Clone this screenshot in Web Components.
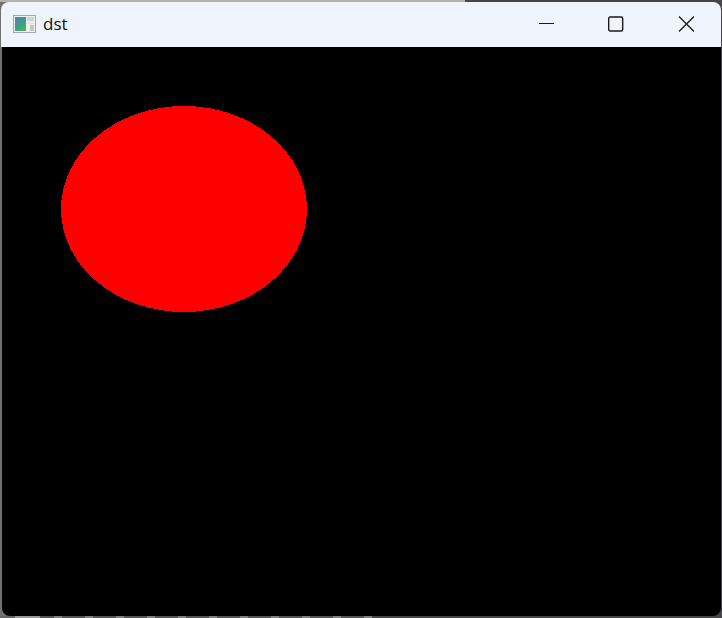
<!DOCTYPE html>
<html>
<head>
<meta charset="utf-8">
<title>dst</title>
<style>
  html, body { margin: 0; height: 100%; background: linear-gradient(90deg, #c4c4c4 50%, #46464a 50%); }
</style>
</head>
<body>
<app-window title="dst">
  <image-canvas></image-canvas>
</app-window>

<script>
class TitleBar extends HTMLElement {
  constructor() {
    super();
    this.attachShadow({ mode: "open" });
  }

  connectedCallback() {
    const title = this.getAttribute("title");
    this.shadowRoot.innerHTML = `
      <style>
        :host {
          display: flex;
          align-items: center;
          box-sizing: border-box;
          height: 45px;
          padding-bottom: 2px;
          flex: none;
          background: #eff3fb;
          border-radius: 8px 8px 0 0;
          color: #111;
          font: 17px "Open Sans", "Noto Sans", sans-serif;
        }
        .icon { display: block; margin-left: 12px; flex: none; }
        .name { margin-left: 7px; flex: 1; }
        .btn { width: 70px; height: 43px; display: flex; align-items: center; justify-content: center; flex: none; }
        .btn svg { display: block; }
      </style>
      <svg class="icon" width="23" height="18" viewBox="0 0 23 18">
        <defs>
          <linearGradient id="pic" x1="0" y1="0" x2="0.7" y2="1">
            <stop offset="0" stop-color="#4a86b0"/>
            <stop offset="0.6" stop-color="#3f9d8c"/>
            <stop offset="1" stop-color="#52ad62"/>
          </linearGradient>
        </defs>
        <rect x="0.5" y="0.5" width="22" height="17" fill="#f0f1ee" stroke="#a6a6b0"/>
        <rect x="2" y="2" width="11" height="14" fill="url(#pic)"/>
        <rect x="14" y="2" width="7" height="4" fill="#ccd5d3"/>
        <rect x="14" y="7" width="7" height="2" fill="#e4e7df"/>
        <rect x="17" y="10" width="4" height="6" fill="#c4cabf"/>
      </svg>
      <span class="name">${title}</span>
      <div class="btn">
        <svg width="16" height="16" viewBox="0 0 16 16"><path d="M1 7.5H16" stroke="#1a1a1a" stroke-width="1" fill="none"/></svg>
      </div>
      <div class="btn">
        <svg width="16" height="16" viewBox="0 0 16 16"><rect x="0.7" y="1" width="14" height="14" rx="1.5" stroke="#1a1a1a" stroke-width="1.4" fill="none"/></svg>
      </div>
      <div class="btn">
        <svg width="16" height="16" viewBox="0 0 16 16"><path d="M1 0.5L16 15.5M16 0.5L1 15.5" stroke="#1a1a1a" stroke-width="1.3" fill="none"/></svg>
      </div>
    `;
  }
}

class ImageCanvas extends HTMLElement {
  constructor() {
    super();
    this.attachShadow({ mode: "open" });
  }

  connectedCallback() {
    // offsets are relative to the canvas box, which starts at 2,47 on the page
    this.shadowRoot.innerHTML = `
      <style>
        :host {
          display: block;
          flex: 1;
          margin-left: 1px;
          background: #000;
          border-radius: 0 0 8px 8px;
          position: relative;
          overflow: hidden;
        }
        svg { position: absolute; left: 0; top: 0; display: block; }
      </style>
      <svg width="719" height="569" viewBox="0 0 719 569" shape-rendering="crispEdges">
        <ellipse cx="182" cy="162" rx="123" ry="103" fill="#ff0000"/>
      </svg>
    `;
  }
}

class AppWindow extends HTMLElement {
  constructor() {
    super();
    this.attachShadow({ mode: "open" });
  }

  connectedCallback() {
    const title = this.getAttribute("title");
    this.shadowRoot.innerHTML = `
      <style>
        :host {
          display: flex;
          flex-direction: column;
          box-sizing: border-box;
          width: 722px;
          height: 618px;
          padding: 2px 1px 2px 1px;
          background:
            linear-gradient(90deg, #b2b2b2 465px, #45454a 465px) top / 100% 2px no-repeat,
            linear-gradient(90deg, #666 15px, #999 15px, #999 40px, transparent 40px, transparent 372px, #45454a 372px) bottom / 100% 2px no-repeat,
            repeating-linear-gradient(90deg, #555 0, #555 23px, #808080 23px, #808080 31px) bottom / 100% 2px no-repeat,
            linear-gradient(90deg, #707070 50%, #45454a 50%);
        }
      </style>
      <title-bar title="${title}"></title-bar>
      <slot></slot>
    `;
  }
}

customElements.define("title-bar", TitleBar);
customElements.define("image-canvas", ImageCanvas);
customElements.define("app-window", AppWindow);
</script>
</body>
</html>
